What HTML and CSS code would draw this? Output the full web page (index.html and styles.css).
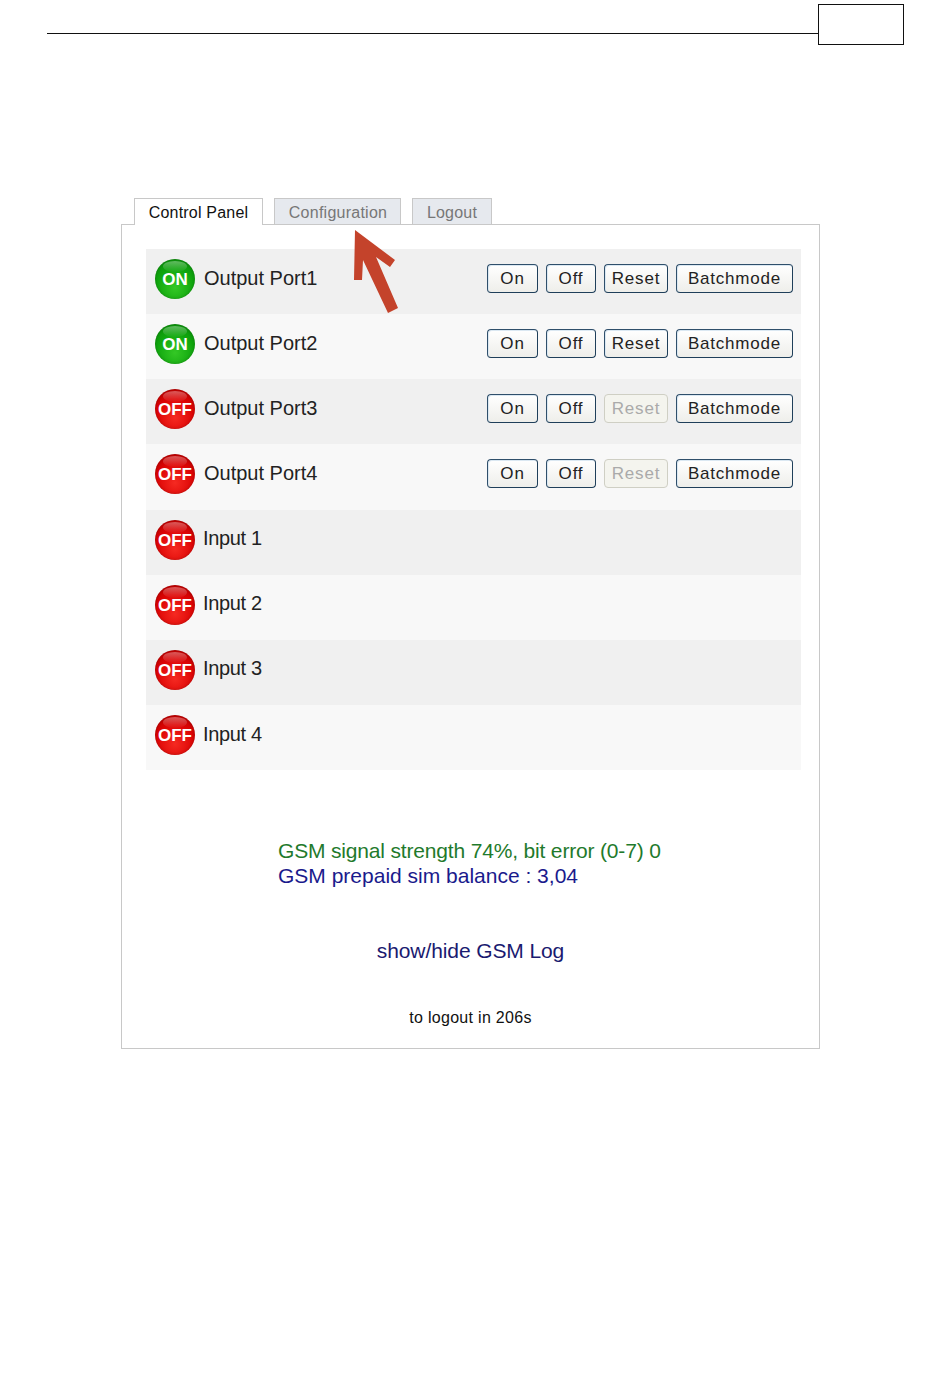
FILE: index.html
```html
<!DOCTYPE html>
<html lang="en">
<head>
<meta charset="utf-8">
<title>Control Panel</title>
<link rel="stylesheet" href="styles.css">
</head>
<body>
<header class="page-head">
  <div class="head-rule"></div>
  <div class="page-box"></div>
</header>
<main class="app">
  <nav class="tabs">
    <a class="tab tab-active">Control Panel</a>
    <a class="tab tab-config">Configuration</a>
    <a class="tab tab-logout">Logout</a>
  </nav>
  <section class="panel">
    <svg class="arrow" width="50" height="90" viewBox="350 226 50 90"><polygon points="355,230 395,260 390,267 376,257 398,308 388,313 363,260 362,280 354,280" fill="#c4432b"/></svg>
    <div class="rows">
      <div class="row"><span class="led led-on">ON</span><span class="label">Output Port1</span><div class="btns"><span class="btn btn-on">On</span><span class="btn btn-off">Off</span><span class="btn btn-reset">Reset</span><span class="btn btn-batch">Batchmode</span></div></div>
      <div class="row"><span class="led led-on">ON</span><span class="label">Output Port2</span><div class="btns"><span class="btn btn-on">On</span><span class="btn btn-off">Off</span><span class="btn btn-reset">Reset</span><span class="btn btn-batch">Batchmode</span></div></div>
      <div class="row"><span class="led led-off">OFF</span><span class="label">Output Port3</span><div class="btns"><span class="btn btn-on">On</span><span class="btn btn-off">Off</span><span class="btn btn-reset btn-disabled">Reset</span><span class="btn btn-batch">Batchmode</span></div></div>
      <div class="row"><span class="led led-off">OFF</span><span class="label">Output Port4</span><div class="btns"><span class="btn btn-on">On</span><span class="btn btn-off">Off</span><span class="btn btn-reset btn-disabled">Reset</span><span class="btn btn-batch">Batchmode</span></div></div>
      <div class="row"><span class="led led-off">OFF</span><span class="label label-input">Input 1</span></div>
      <div class="row"><span class="led led-off">OFF</span><span class="label label-input">Input 2</span></div>
      <div class="row"><span class="led led-off">OFF</span><span class="label label-input">Input 3</span></div>
      <div class="row"><span class="led led-off">OFF</span><span class="label label-input">Input 4</span></div>
    </div>
    <div class="gsm">
      <div class="gsm-signal">GSM signal strength 74%, bit error (0-7) 0</div>
      <div class="gsm-balance">GSM prepaid sim balance : 3,04</div>
    </div>
    <div class="gsm-log">show/hide GSM Log</div>
    <div class="countdown">to logout in 206s</div>
  </section>
</main>
</body>
</html>
```
FILE: styles.css
```css
* { box-sizing: border-box; }
html, body { margin: 0; background: #fff; }
body { font-family: "Liberation Sans", Arial, sans-serif; color: #111; height: 1388px; overflow: hidden; }

.page-head { display: flex; align-items: flex-start; padding: 4px 0 0 47px; height: 198px; }
.head-rule { width: 771px; height: 1px; margin-top: 29px; background: #111; }
.page-box { width: 86px; height: 41px; border: 1px solid #111; }

.app { margin-left: 121px; width: 699px; }
.tabs { display: flex; height: 26px; padding-left: 13px; position: relative; z-index: 1; }
.tab { height: 26px; font-size: 16px; letter-spacing: .2px; line-height: 27px; text-align: center; border: 1px solid #c8c8c8; border-bottom: 0; white-space: nowrap; }
.tab-active { width: 129px; background: #fff; color: #111; height: 27px; margin-right: 11px; }
.tab-config { width: 127px; background: #e6e9ee; color: #777; margin-right: 11px; letter-spacing: .25px; padding-left: 1px; }
.tab-logout { width: 80px; background: #e6e9ee; color: #777; }

.panel { position: relative; height: 825px; border: 1px solid #c8c8c8; padding: 24px 18px 0 24px; }
.arrow { position: absolute; left: 228px; top: 1px; z-index: 2; }

.rows { display: flex; flex-direction: column; }
.row { height: 65.15px; display: flex; align-items: center; padding: 0 8px 5px 9px; background: #f8f8f8; }
.row:nth-child(odd) { background: #f0f0f0; }

.led { position: relative; width: 40px; height: 40px; padding-top: 2px; border-radius: 50%; flex: none; display: flex; align-items: center; justify-content: center; color: #fff; font-weight: 700; font-size: 17px; box-shadow: inset 0 0 3px rgba(0,0,0,.25); }
.led::before { content: ""; position: absolute; left: 8px; right: 8px; top: 2px; height: 11px; border-radius: 50%; background: linear-gradient(rgba(255,255,255,.35), rgba(255,255,255,.02)); }
.led-on { background: radial-gradient(circle at 50% 72%, #34c825 0%, #0fa50d 55%, #0a860a 100%); }
.led-off { background: radial-gradient(circle at 50% 72%, #f52a22 0%, #dc0404 55%, #ae0000 100%); }

.label { margin-left: 9px; font-size: 20px; line-height: 24px; margin-top: -3px; color: #222; }
.label-input { margin-left: 8px; letter-spacing: -.35px; }

.btns { margin-left: auto; margin-top: -2px; display: flex; gap: 8px; }
.btn { height: 29px; font-size: 17px; letter-spacing: .8px; line-height: 28px; text-align: center; color: #222; background: linear-gradient(#fff, #eeeeea); border: 1px solid #2f4f6b; border-right-color: #1f3f5a; border-bottom-color: #1f3f5a; border-radius: 4px; box-shadow: inset 1px 1px 0 #dbe8f2; }
.btn-on { width: 51px; }
.btn-off { width: 50px; }
.btn-reset { width: 64px; }
.btn-batch { width: 117px; }
.btn-disabled { color: #aaa; border-color: #cfcfc4; background: #f4f4ee; box-shadow: none; }

.gsm { margin: 68px 0 0 132px; font-size: 21px; line-height: 25px; }
.gsm-signal { color: #1f7a2c; letter-spacing: -.17px; }
.gsm-balance { color: #1a1a8c; }
.gsm-log { margin-top: 50px; text-align: center; font-size: 21px; letter-spacing: -.1px; line-height: 25px; color: #1a1a70; padding-right: 6px; }
.countdown { margin-top: 45px; text-align: center; font-size: 16px; letter-spacing: .3px; line-height: 20px; color: #111; padding-right: 6px; }
```
